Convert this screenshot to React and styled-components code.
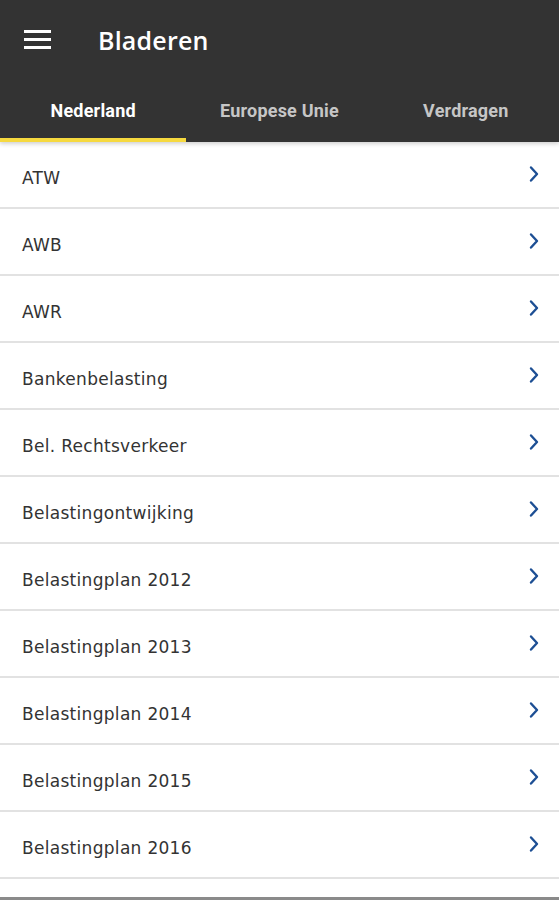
import React, { useState } from 'react'
import styled, { createGlobalStyle } from 'styled-components'

const GlobalStyle = createGlobalStyle`
  html, body {
    margin: 0;
    padding: 0;
    background: #ffffff;
  }
  * { box-sizing: border-box; }
`

const tabs = ['Nederland', 'Europese Unie', 'Verdragen']

const items = [
  'ATW',
  'AWB',
  'AWR',
  'Bankenbelasting',
  'Bel. Rechtsverkeer',
  'Belastingontwijking',
  'Belastingplan 2012',
  'Belastingplan 2013',
  'Belastingplan 2014',
  'Belastingplan 2015',
  'Belastingplan 2016',
]

function App() {
  const [active, setActive] = useState(0)

  return (
    <Page>
      <GlobalStyle />
      <Header>
        <Toolbar>
          <MenuButton aria-label="menu">
            <span /><span /><span />
          </MenuButton>
          <Title>Bladeren</Title>
        </Toolbar>
        <TabBar>
          {tabs.map((tab, i) => (
            <Tab key={tab} $active={i === active} onClick={() => setActive(i)}>
              {tab}
            </Tab>
          ))}
        </TabBar>
      </Header>
      <List>
        {items.map((item) => (
          <Row key={item}>
            <Label>{item}</Label>
            <Chevron viewBox="0 0 10 18">
              <path d="M2 2.5 L8 9 L2 15.5" />
            </Chevron>
          </Row>
        ))}
      </List>
    </Page>
  )
}

const Page = styled.div`
  width: 559px;
  height: 900px;
  overflow: hidden;
  background: #fff;
  display: flex;
  flex-direction: column;
  border-bottom: 3px solid #8a8a8a;
`

const Header = styled.header`
  background: #333333;
  box-shadow: 0 2px 4px rgba(0, 0, 0, 0.18);
  position: relative;
  z-index: 1;
`

const Toolbar = styled.div`
  height: 82px;
  display: flex;
  align-items: center;
  padding-left: 24px;
`

const MenuButton = styled.div`
  width: 27px;
  display: flex;
  flex-direction: column;
  gap: 5px;
  margin-right: 47px;
  margin-top: -4px;

  span {
    display: block;
    height: 3px;
    background: #ffffff;
  }
`

const Title = styled.h1`
  margin: 0;
  margin-top: -2px;
  color: #ffffff;
  font-family: "Open Sans", "DejaVu Sans", sans-serif;
  font-size: 25px;
  font-weight: 600;
  letter-spacing: 0.2px;
`

const TabBar = styled.nav`
  display: grid;
  grid-template-columns: repeat(3, 1fr);
  height: 60px;
`

const Tab = styled.div`
  display: flex;
  align-items: center;
  justify-content: center;
  padding-bottom: 0;
  font-family: Roboto, "Liberation Sans", sans-serif;
  font-weight: 700;
  font-size: 18px;
  letter-spacing: 0.2px;
  color: ${(p) => (p.$active ? '#ffffff' : '#c6c6c6')};
  border-bottom: 4px solid ${(p) => (p.$active ? '#f6d93f' : 'transparent')};
  cursor: pointer;
`

const List = styled.ul`
  list-style: none;
  margin: 0;
  padding: 0;
  flex: 1;
`

const Row = styled.li`
  height: 67px;
  display: flex;
  align-items: center;
  justify-content: space-between;
  padding: 0 20px 0 22px;
  border-bottom: 2px solid #e2e2e2;
`

const Label = styled.span`
  font-family: "DejaVu Sans", sans-serif;
  font-size: 17px;
  color: #333333;
  letter-spacing: 0.3px;
  padding-top: 7px;
`

const Chevron = styled.svg`
  width: 10px;
  height: 18px;
  margin-top: -2px;
  fill: none;
  stroke: #1d4f94;
  stroke-width: 2.4;
  stroke-linecap: round;
  stroke-linejoin: round;
`

export default App
